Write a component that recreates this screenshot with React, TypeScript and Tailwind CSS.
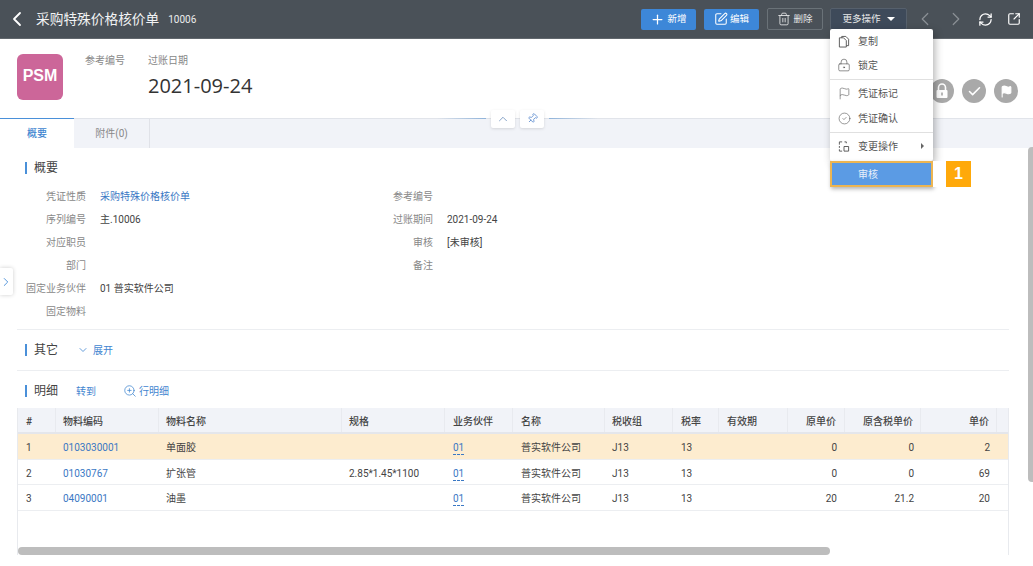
import { Plus, SquarePen, Trash2, ChevronLeft, ChevronRight, ChevronDown, ChevronUp, RefreshCw, SquareArrowOutUpRight, LockKeyhole, Flag, CircleCheck, Check, Pin, ZoomIn } from "lucide-react";

const font = "font-['Roboto','Noto_Sans_CJK_SC',sans-serif]";

const cols = [
  { t: "#", w: "w-[38px]", pl: "pl-[8px]" },
  { t: "物料编码", w: "w-[103px]", pl: "pl-[7px]" },
  { t: "物料名称", w: "w-[183px]", pl: "pl-[7px]" },
  { t: "规格", w: "w-[103px]", pl: "pl-[7px]" },
  { t: "业务伙伴", w: "w-[68px]", pl: "pl-[8px]" },
  { t: "名称", w: "w-[92px]", pl: "pl-[8px]" },
  { t: "税收组", w: "w-[68px]", pl: "pl-[7px]" },
  { t: "税率", w: "w-[46px]", pl: "pl-[8px]" },
  { t: "有效期", w: "w-[69px]", pl: "pl-[8px]" },
  { t: "原单价", w: "w-[57px]", pl: "pr-[8px] text-right" },
  { t: "原含税单价", w: "w-[76px]", pl: "pr-[7px] text-right" },
  { t: "单价", w: "w-[76px]", pl: "pr-[7px] text-right" },
  { t: "", w: "w-[12px]", pl: "" },
];

const rows = [
  ["1", "0103030001", "单面胶", "", "01", "普实软件公司", "J13", "13", "", "0", "0", "2", ""],
  ["2", "01030767", "扩张管", "2.85*1.45*1100", "01", "普实软件公司", "J13", "13", "", "0", "0", "69", ""],
  ["3", "04090001", "油墨", "", "01", "普实软件公司", "J13", "13", "", "20", "21.2", "20", ""],
];

const leftFields = [
  ["凭证性质", "采购特殊价格核价单", true],
  ["序列编号", "主.10006", false],
  ["对应职员", "", false],
  ["部门", "", false],
  ["固定业务伙伴", "01 普实软件公司", false],
  ["固定物料", "", false],
] as const;

const rightFields = [
  ["参考编号", ""],
  ["过账期间", "2021-09-24"],
  ["审核", "[未审核]"],
  ["备注", ""],
  ["", ""],
  ["", ""],
];

function SectionTitle({ children }: { children: string }) {
  return (
    <div className="flex items-center">
      <span className="w-[2px] h-[12px] bg-[#4a90d9] mr-[7px]" />
      <span className="text-[12px] leading-[16px] text-[#444] w-[25px]">{children}</span>
    </div>
  );
}

function CopyIcon() {
  return (
    <svg width="13" height="13" viewBox="0 0 13 13" fill="none" stroke="#555" strokeWidth="1">
      <path d="M4 2.5V1h4.5L11.5 4v7H9" />
      <path d="M1.5 2.5H6l3 3v7H1.5z" />
    </svg>
  );
}

function ChangeIcon() {
  return (
    <svg width="13" height="13" viewBox="0 0 13 13" fill="none" stroke="#555" strokeWidth="1">
      <path d="M4.5 1.5h-3v3M1.5 6v2M1.5 9.5v2h3M7 1.5h2V3M6.5 11.5v-5h5v5z" />
    </svg>
  );
}

function LockFilled() {
  return (
    <svg width="14" height="16" viewBox="0 0 14 16">
      <path d="M3.5 7V4.5a3.5 3.5 0 0 1 7 0V7" fill="none" stroke="#fff" strokeWidth="1.6" />
      <rect x="1.5" y="7" width="11" height="8" rx="1" fill="#fff" />
      <rect x="6.2" y="9.5" width="1.6" height="3" fill="#a9a9a9" />
    </svg>
  );
}

function MenuItem({ icon, label, arrow }: { icon: React.ReactNode; label: string; arrow?: boolean }) {
  return (
    <div className="h-[24px] flex items-center pl-[8px] text-[10px] text-[#555]">
      <span className="w-[12px] h-[12px] flex items-center justify-center mr-[8px] text-[#555]">{icon}</span>
      <span className="flex-1">{label}</span>
      {arrow && <span className="w-0 h-0 mr-[9px] border-y-[3px] border-y-transparent border-l-[3px] border-l-[#666]" />}
    </div>
  );
}

export default function App() {
  return (
    <div className={`${font} relative w-[1033px] h-[566px] overflow-hidden bg-white text-[10px] text-[#444]`}>
      {/* top bar */}
      <header className="h-[39px] bg-[#4a5158] border-b border-b-[#61676d] flex items-center text-white">
        <ChevronLeft className="ml-[5px] mr-[7px] w-[24px] h-[24px]" strokeWidth={1.8} />
        <span className="text-[13.7px] text-[#f2f3f4]">采购特殊价格核价单</span>
        <span className="ml-[9px] text-[10px] text-[#eceded]">10006</span>
        <div className="ml-auto flex items-center">
          <button className="w-[55px] h-[21px] rounded-[2px] bg-[#3d87d8] flex items-center justify-center text-[9.5px] gap-[2px]">
            <Plus className="w-[15px] h-[15px]" strokeWidth={2} />新增
          </button>
          <button className="ml-[8px] w-[55px] h-[21px] rounded-[2px] bg-[#3d87d8] flex items-center justify-center text-[9.5px] gap-[2px]">
            <SquarePen className="w-[14px] h-[14px]" strokeWidth={1.8} />编辑
          </button>
          <button className="ml-[8px] w-[56px] h-[22px] rounded-[2px] border border-[#6a7278] flex items-center justify-center text-[9.5px] gap-[2px] text-[#e4e5e6]">
            <Trash2 className="w-[14px] h-[14px]" strokeWidth={1.5} />删除
          </button>
          <button className="ml-[7px] w-[77px] h-[22px] rounded-[2px] border border-[#56606c] bg-[#3e4a5a] flex items-center justify-center text-[9.5px] gap-[6px] text-[#e8e9ea]">
            更多操作
            <span className="w-0 h-0 border-x-[4px] border-x-transparent border-t-[4px] border-t-white" />
          </button>
          <ChevronLeft className="ml-[7px] w-[22px] h-[22px] text-[#8b9096]" strokeWidth={1.3} />
          <ChevronRight className="ml-[9px] w-[22px] h-[22px] text-[#8b9096]" strokeWidth={1.3} />
          <RefreshCw className="ml-[11px] w-[15px] h-[15px] text-white" strokeWidth={2} />
          <SquareArrowOutUpRight className="ml-[14px] mr-[12px] w-[14px] h-[14px] text-white" strokeWidth={2} />
        </div>
      </header>

      {/* document head */}
      <section className="h-[79px] flex pl-[17px] pt-[15px]">
        <div className="w-[46px] h-[46px] pb-[2px] rounded-[6px] bg-[#cc6699] flex items-center justify-center text-white text-[16px] font-bold font-['Liberation_Sans','Noto_Sans_CJK_SC',sans-serif]">PSM</div>
        <div className="ml-[22px] w-[63px] text-[10px] text-[#888] leading-[16px] mt-[-1px]">参考编号</div>
        <div className="mt-[-1px]">
          <div className="text-[10px] text-[#888] leading-[16px]">过账日期</div>
          <div className="text-[20px] leading-[30px] text-[#333] font-['Open_Sans',sans-serif] mt-[2px]">2021-09-24</div>
        </div>
        <div className="ml-auto mr-[15px] mt-[25px] flex gap-[8px]">
          <span className="w-[24px] h-[24px] rounded-full bg-[#a9a9a9] flex items-center justify-center"><LockFilled /></span>
          <span className="w-[24px] h-[24px] rounded-full bg-[#a9a9a9] flex items-center justify-center"><Check className="w-[15px] h-[15px] text-white" strokeWidth={2.5} /></span>
          <span className="w-[24px] h-[24px] rounded-full bg-[#a9a9a9] flex items-center justify-center"><Flag className="w-[13px] h-[13px] text-white fill-white" strokeWidth={2} /></span>
        </div>
      </section>

      {/* tabs */}
      <nav className="relative h-[30px] bg-[#f1f3f8] border-t border-t-[#e1e4ea] flex">
        <div className="w-[74px] h-[30px] mt-[-1px] bg-white border-t-[1.5px] border-t-[#4a90d9] flex items-center justify-center text-[10px] font-medium text-[#3f85d0]">概要</div>
        <div className="w-[76px] border-r border-r-[#e0e2e8] flex items-center justify-center text-[10px] text-[#888]">附件(0)</div>
        <div className="absolute left-[437px] w-[161px] top-[-1px] h-[1px] flex items-center justify-center gap-[5px]">
          <span className="w-[50px] h-[1px] bg-gradient-to-r from-transparent to-[#8fb3da]" />
          <span className="w-[24px] h-[18px] bg-white rounded-[2px] shadow-[0_1px_3px_rgba(0,0,0,0.12)] flex items-center justify-center shrink-0"><ChevronUp className="w-[14px] h-[14px] text-[#7d9cc4]" strokeWidth={1.6} /></span>
          <span className="w-[24px] h-[18px] bg-white rounded-[2px] shadow-[0_1px_3px_rgba(0,0,0,0.12)] flex items-center justify-center shrink-0"><Pin className="w-[11px] h-[11px] text-[#5f8ed0] rotate-45" strokeWidth={1.8} /></span>
          <span className="w-[50px] h-[1px] bg-gradient-to-l from-transparent to-[#8fb3da]" />
        </div>
      </nav>

      {/* summary */}
      <section className="mx-[17px] w-[992px] h-[182px] border-b border-b-[#eceef1] pt-[12px]">
        <div className="pl-[8px]"><SectionTitle>概要</SectionTitle></div>
        <div className="mt-[9px] ml-[-17px] flex">
          <div className="w-[347px]">
            {leftFields.map(([k, v, link]) => (
              <div key={k} className="h-[23px] flex items-center">
                <span className="w-[86px] text-right text-[#888]">{k}</span>
                <span className={`ml-[14px] ${link ? "text-[#3a78c4]" : "text-[#444]"}`}>{v}</span>
              </div>
            ))}
          </div>
          <div>
            {rightFields.map(([k, v], i) => (
              <div key={i} className="h-[23px] flex items-center">
                <span className="w-[86px] text-right text-[#888]">{k}</span>
                <span className="ml-[14px] text-[#444]">{v}</span>
              </div>
            ))}
          </div>
        </div>
      </section>

      {/* others */}
      <div className="mx-[17px] w-[992px] h-[41px] pl-[8px] pt-[12px] flex items-start border-b border-b-[#eceef1]">
        <SectionTitle>其它</SectionTitle>
        <span className="ml-[18px] flex items-center h-[16px] text-[#3f85d0] gap-[4px]"><ChevronDown className="w-[12px] h-[12px]" strokeWidth={1.6} />展开</span>
      </div>

      {/* details */}
      <div className="h-[37px] pl-[25px] pt-[12px] flex items-start">
        <SectionTitle>明细</SectionTitle>
        <span className="ml-[17px] h-[16px] flex items-center text-[#3f85d0]">转到</span>
        <span className="ml-[27px] h-[16px] flex items-center text-[#3f85d0] gap-[2px]"><ZoomIn className="w-[14px] h-[14px]" strokeWidth={1.3} />行明细</span>
      </div>

      <div className="ml-[17px] w-[992px] h-[147px] border-x border-x-[#e8eaee] relative">
        <div className="flex h-[26px] bg-[#f1f3f8] border-b-2 border-b-[#e4e6eb] font-medium text-[#444]">
          {cols.map((c, i) => (
            <div key={i} className={`${c.w} ${c.pl} shrink-0 leading-[27px] border-r border-r-[#e8eaef]`}>{c.t}</div>
          ))}
        </div>
        {rows.map((r, ri) => (
          <div key={ri} className={`flex h-[25.5px] border-b border-b-[#eceef1] ${ri === 0 ? "bg-[#fdeccf]" : "bg-white"}`}>
            {r.map((v, i) => (
              <div key={i} className={`${cols[i].w} ${cols[i].pl} shrink-0 leading-[27px] ${i === 1 ? "text-[#3a78c4]" : "text-[#444]"}`}>
                {i === 4 ? <span className="text-[#3a78c4] border-b border-dashed border-b-[#3a78c4] pb-[1px]">{v}</span> : v}
              </div>
            ))}
          </div>
        ))}
        <div className="absolute left-0 top-[139px] w-[812px] h-[8px] rounded-[4px] bg-[#bdbdbd]" />
      </div>

      {/* page scrollbar */}
      <div className="absolute left-[1028px] top-[147px] w-[5px] h-[335px] rounded-l-[4px] bg-[#bdbdbd]" />

      {/* left drawer toggle */}
      <div className="absolute left-0 top-[268px] w-[13px] h-[27px] bg-white rounded-r-[2px] shadow-[0_0_4px_rgba(0,0,0,0.2)] flex items-center">
        <ChevronRight className="shrink-0 w-[14px] h-[14px] text-[#4a90d9] ml-[-1px]" strokeWidth={1.6} />
      </div>

      {/* dropdown */}
      <div className="absolute left-[830px] top-[29px] w-[103px] bg-white rounded-[2px] shadow-[2px_3px_8px_rgba(0,0,0,0.3)]">
        <MenuItem icon={<CopyIcon />} label="复制" />
        <MenuItem icon={<LockKeyhole className="w-[14px] h-[14px] shrink-0" strokeWidth={1.1} />} label="锁定" />
        <div className="h-px bg-[#e0e0e0] mt-[2px] mb-[1px]" />
        <MenuItem icon={<Flag className="w-[13px] h-[13px] shrink-0" strokeWidth={1.1} />} label="凭证标记" />
        <div className="h-[1px]" />
        <MenuItem icon={<CircleCheck className="w-[13px] h-[13px] shrink-0" strokeWidth={1.1} />} label="凭证确认" />
        <div className="h-px bg-[#e0e0e0] my-[1.5px]" />
        <MenuItem icon={<ChangeIcon />} label="变更操作" arrow />
        <div className="h-[3px]" />
      </div>

      {/* highlighted step */}
      <div className="absolute left-[830px] top-[161px] flex h-[26px] items-stretch">
        <div className="w-[103px] border-2 border-[#ecb552] bg-[#5b9be4] text-[#e6effa] flex items-center pl-[26px] text-[10px] shadow-[1px_2px_4px_rgba(0,0,0,0.3)]">审核</div>
        <div className="w-[13px] bg-white" />
        <div className="w-[25px] bg-[#ffa90a] text-white text-[16px] font-bold flex items-center justify-center font-['Liberation_Sans',sans-serif]">1</div>
      </div>
    </div>
  );
}
